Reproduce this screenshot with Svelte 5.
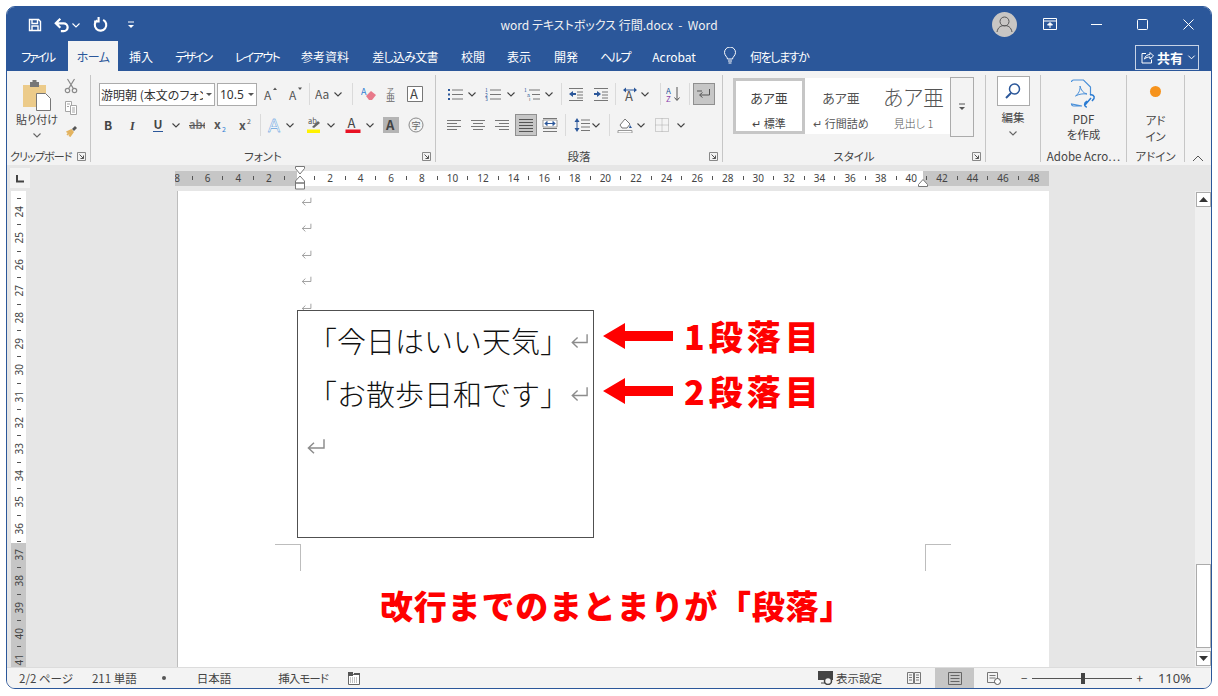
<script>
const tabs = [["ファイル", 61, -2.2], ["ホーム", 50, -0.6], ["挿入", 46, 0], ["デザイン", 58, -2], ["レイアウト", 70, -1.6], ["参考資料", 66, 0], ["差し込み文書", 94, -0.7], ["校閲", 42, 0], ["表示", 50, 0], ["開発", 44, 0], ["ヘルプ", 54, -1.6], ["Acrobat", 64, 0]];

const line = 'fill="none" stroke="currentColor"';
const lines = (arr, c = "#777") => arr.map(([a, b, y]) => `<path d="M${a} ${y}H${b}" stroke="${c}" fill="none"/>`).join("");

// all icons are drawn on a 16x16 box
const I = {
  save: `<path d="M2.5 2.5h9l2 2v9h-11zM5 2.5v4h5.5v-4M5 13.5v-4.5h6v4.5" ${line} stroke-width="1.4"/>`,
  undo: `<path d="M6.5 2.5 2.5 6.5l4 4M3 6.5h6.5a3.4 3.4 0 0 1 0 7H7" ${line} stroke-width="2"/>`,
  redo: `<path d="M10.5 3.6a5.4 5.4 0 1 1-5.6.4M6.2 1v4.2H2" ${line} stroke-width="2"/>`,
  qat: `<path d="M5 5h6" stroke="currentColor"/><path d="M5 8h6l-3 3z" fill="currentColor"/>`,
  chev: `<path d="M4.5 6.5 8 10l3.5-3.5" ${line} stroke-width="1.1"/>`,
  cut: `<g fill="none" stroke="#8a8a8a" stroke-width="1.2"><circle cx="4.5" cy="12.5" r="2.2"/><circle cx="11.5" cy="12.5" r="2.2"/><path d="M5.6 10.6 11.5 1M10.4 10.6 4.5 1"/></g>`,
  copy: `<g fill="#fff" stroke="#a5a5a5"><path d="M2.5 1.5h6v10h-6z"/><path d="M7.5 5.5h6v9h-6z"/><path d="M4 4h3M4 6.5h2M9 8h3M9 10h3M9 12h3"/></g>`,
  painter: `<path d="M9 7l3-3 2 2-3 3z" fill="#555"/><path d="M3 9.5 8.5 7 11 10l-3.5 5-2-1 1-2-2 1.500-1-1 1.500-2-1 .5z" fill="#e3b35f"/>`,
  grow: `<text x="2" y="14" font-size="12" fill="#555">A</text><path d="M11 4l2-2.500L15 4z" fill="#555"/>`,
  shrink: `<text x="2" y="14" font-size="12" fill="#555">A</text><path d="M11 1.500l2 2.500 2-2.500z" fill="#555"/>`,
  case: `<text x="0" y="13" font-size="12" fill="#555">Aa</text>`,
  erase: `<text x="0" y="9" font-size="9" fill="#2b7cd3">A</text><path d="M5 10l5-5 5 4-4 5H8z" fill="#e8798a"/>`,
  ruby: `<text x="4" y="7" font-size="7" fill="#666">ア</text><text x="3" y="15" font-size="9" fill="#666">亜</text>`,
  boxa: `<path d="M.5.5h15v15H.5z" fill="#fff" stroke="#777"/><text x="3" y="13" font-size="13" fill="#444">A</text>`,
  bold: `<text x="4" y="13" font-size="12" font-weight="700" fill="#444">B</text>`,
  ital: `<text x="5" y="13" font-size="12" font-weight="700" font-style="italic" font-family="Liberation Serif" fill="#444">I</text>`,
  under: `<text x="3.500" y="12" font-size="12" font-weight="700" fill="#444">U</text><path d="M3 14.500h10" stroke="#2b579a"/>`,
  strike: `<text x="0" y="12" font-size="11" font-weight="700" fill="#777">abc</text><path d="M0 8.500h16" stroke="#555"/>`,
  sub: `<text x="2" y="12" font-size="12" font-weight="700" fill="#555">x</text><text x="10" y="15" font-size="7" fill="#2b7cd3">2</text>`,
  sup: `<text x="2" y="13" font-size="12" font-weight="700" fill="#555">x</text><text x="10" y="7" font-size="7" fill="#555">2</text>`,
  effect: `<text x="1" y="15" font-size="18" font-weight="300" font-family="Liberation Sans" fill="#eaf3fb" stroke="#2b7cd3" stroke-width=".35">A</text>`,
  mark: `<text x="2" y="7" font-size="7.500" fill="#555">ab</text><path d="M6 10l6-6 2 2-6 5z" fill="#666"/><path d="M1 12.500h13V16H1z" fill="#fff200"/>`,
  color: `<text x="2.500" y="11" font-size="13" fill="#444">A</text><path d="M.5 12.500h15V16H.5z" fill="#e81123"/>`,
  shade: `<path d="M0 0h16v16H0z" fill="#b4b4b4"/><text x="3" y="13" font-size="13" fill="#444" font-weight="700">A</text>`,
  enclose: `<circle cx="8" cy="8" r="7" fill="none" stroke="#888"/><text x="3.500" y="12" font-size="9" fill="#666">字</text>`,
  bullets: `<path d="M1 3h2v2H1zM1 7.500h2v2H1zM1 12h2v2H1z" fill="#2b579a"/>` + lines([[5, 16, 4], [5, 16, 8.5], [5, 16, 13]]),
  numbers: `<text x="0" y="6" font-size="5" fill="#2b579a">1</text><text x="0" y="10.500" font-size="5" fill="#2b579a">2</text><text x="0" y="15" font-size="5" fill="#2b579a">3</text>` + lines([[5, 16, 4], [5, 16, 8.5], [5, 16, 13]]),
  multi: `<text x="0" y="6" font-size="5" fill="#2b579a">1</text><text x="3" y="10.500" font-size="5" fill="#2b579a">a</text><text x="5" y="15" font-size="5" fill="#666">i</text>` + lines([[5, 16, 4], [8, 16, 8.5], [9, 16, 13]]),
  outdent: `<path d="M1 8l4-3v2h3v2H5v2z" fill="#2b579a"/>` + lines([[1, 15, 2.5], [9, 15, 6], [9, 15, 9], [9, 15, 12], [1, 15, 14.5]]),
  indent: `<path d="M8 8 4 5v2H1v2h3v2z" fill="#2b579a"/>` + lines([[1, 15, 2.5], [9, 15, 6], [9, 15, 9], [9, 15, 12], [1, 15, 14.5]]),
  xtext: `<text x="3" y="15" font-size="13" fill="#555">A</text><path d="M1 4l3-2.500v5zM15 4l-3-2.500v5z" fill="#2b579a"/><path d="M4 4h8" stroke="#2b579a"/>`,
  sort: `<text x="0" y="7.500" font-size="8" fill="#2b579a">A</text><text x="0" y="15.500" font-size="8" fill="#8e44ad">Z</text><path d="M11 1v13M8.500 11.500 11 14.500l2.500-3" ${line} color="#555"/>`,
  marks: `<path d="M13.500 3v6H4M6.500 6.500 3.500 9l3 2.500M1 5h5" fill="none" stroke="#555"/>`,
  left: lines([[1, 15, 3.5], [1, 11, 6.5], [1, 15, 9.5], [1, 11, 12.5]]),
  center: lines([[1, 15, 3.5], [3, 13, 6.5], [1, 15, 9.5], [3, 13, 12.5]]),
  right: lines([[1, 15, 3.5], [5, 15, 6.5], [1, 15, 9.5], [5, 15, 12.5]]),
  just: lines([[1, 15, 2.5], [1, 15, 5.5], [1, 15, 8.5], [1, 15, 11.5], [1, 15, 14.5]], "#555"),
  dist: lines([[1, 15, 1.5], [1, 15, 11.5], [1, 15, 14.5]]) + `<path d="M1 3h14v7H1z" fill="#fff" stroke="#999"/><path d="M3 6.500h10M3 6.500l2-2v4zM13 6.500l-2-2v4z" stroke="#2b579a" fill="#2b579a"/>`,
  spacing: `<path d="M3 1l2.500 4h-5zM3 15l2.500-4h-5z" fill="#2b579a"/><path d="M3 5v6" stroke="#2b579a"/>` + lines([[7, 16, 3], [7, 16, 6.5], [7, 16, 10], [7, 16, 13.5]]),
  bucket: `<path d="M3 8l5-6 5 5-3 4H5z" fill="#fff" stroke="#777"/><path d="M13 8l2 3h-3z" fill="#2b579a"/><path d="M1 13.500h14V16H1z" fill="#fff" stroke="#999"/>`,
  grid: `<path d="M1.500 1.500h13v13h-13zM8 1.500v13M1.500 8h13" fill="none" stroke="#a8a8a8" stroke-dasharray="1 1"/>`,
  launch: `<path d="M.5.5h8v8h-8z" fill="none" stroke="#888"/><path d="M2.500 2.500l4 4M6.500 3.500v3h-3" fill="none" stroke="#555"/>`
};

// place items by the x of their centre: a flex row with computed margins
function lay(x0, items) {
  let prev = x0;
  return items.map(([name, cx, w = 16]) => {
    const ml = cx - w / 2 - prev;
    prev = cx + w / 2;
    return { name, w, ml };
  });
}

const ch = (cx) => ["chev", cx, 10];
const sep = (cx) => ["sep", cx, 1];

const font1 = lay(257, [["grow", 270], ["shrink", 295], sep(309), ["case", 323], ch(338), sep(352), ["erase", 369], ["ruby", 391], ["boxa", 415]]);
const font2 = lay(99, [["bold", 108], ["ital", 133], ["under", 158], ch(176), ["strike", 197], ["sub", 220], ["sup", 245], sep(260), ["effect", 275], ch(290), ["mark", 314], ch(331), ["color", 353], ch(370), ["shade", 391], ["enclose", 416]]);
const para1 = lay(436, [["bullets", 455], ch(472), ["numbers", 493], ch(511), ["multi", 532], ch(549), sep(561), ["outdent", 576], ["indent", 601], sep(615), ["xtext", 630], ch(645), sep(660), ["sort", 674], sep(689), ["marks", 704, 22]]);
const para2 = lay(436, [["left", 454], ["center", 478], ["right", 502], ["just", 526, 22], ["dist", 550], sep(565), ["spacing", 582], ch(596), sep(609), ["bucket", 625], ch(641), ["grid", 662], ch(681)]);

const hNums = Array.from({ length: 57 }, (_, i) => i - 8);
const vNums = Array.from({ length: 36 }, (_, i) => 23.5 + i / 2);
</script>

{#snippet arrowMark(w)}
  <svg class="ret" width={w} height={w * 0.8} viewBox="0 0 15 12"><path d="M13.500 1v6.500H2M6 3.500 1.800 7.500 6 11.500" fill="none" stroke="#8c8c8c" stroke-width="1.100"/></svg>
{/snippet}

{#snippet row(items)}
  <div class="row">
    {#each items as it}
      {#if it.name === "sep"}
        <i class="vsep" style="margin-left:{it.ml}px"></i>
      {:else}
        <svg class:on={it.name === "marks" || it.name === "just"} class="ic" style="margin-left:{it.ml}px" width={it.w} height={it.name === "chev" ? 16 : it.w} viewBox={it.w === 22 ? "-3 -3 22 22" : it.w === 10 ? "3 0 10 16" : "0 0 16 16"}>{@html I[it.name]}</svg>
      {/if}
    {/each}
  </div>
{/snippet}

{#snippet launcher()}
  <svg class="launch" width="9" height="9" viewBox="0 0 9 9">{@html I.launch}</svg>
{/snippet}

<div class="window">
  <header class="title">
    <div class="qat">
      <svg width="16" height="16" viewBox="0 0 16 16" class="q1">{@html I.save}</svg>
      <svg width="18" height="18" viewBox="0 0 16 16" class="q2">{@html I.undo}</svg>
      <svg width="10" height="16" viewBox="3 0 10 16">{@html I.chev}</svg>
      <svg width="17" height="17" viewBox="0 0 16 16" class="q3">{@html I.redo}</svg>
      <svg width="12" height="16" viewBox="2 0 12 16" class="q4">{@html I.qat}</svg>
    </div>
    <div class="doc">word テキストボックス 行間.docx&nbsp; - &nbsp;Word</div>
    <div class="winbtns">
      <span class="wb">
        <svg width="25" height="25" viewBox="0 0 25 25"><circle cx="12.500" cy="12.500" r="12.500" fill="#c8c6c4"/><circle cx="12.500" cy="9.500" r="4.500" fill="none" stroke="#555"/><path d="M5 20c1-5 4-6.500 7.500-6.500S19 15 20 20" fill="none" stroke="#555"/></svg>
      </span>
      <span class="wb">
        <svg width="14" height="12" viewBox="0 0 14 12"><path d="M.5.5h13v11H.5zM.5 3h13" fill="none" stroke="#fff"/><path d="M7 4.500 4.500 7h5zM7 7v3" stroke="#fff" fill="#fff"/></svg>
      </span>
      <span class="wb"><svg width="11" height="11" viewBox="0 0 11 11"><path d="M0 5.500h11" stroke="#fff"/></svg></span>
      <span class="wb"><svg width="11" height="11" viewBox="0 0 11 11"><rect x=".5" y=".5" width="10" height="10" rx="1" fill="none" stroke="#fff"/></svg></span>
      <span class="wb"><svg width="11" height="11" viewBox="0 0 11 11"><path d="M.5.5l10 10M10.500.5l-10 10" stroke="#fff"/></svg></span>
    </div>
  </header>

  <nav class="tabs">
    {#each tabs as [label, w, ls], i}
      <div class="tab" class:active={i === 1} style="width:{w}px;letter-spacing:{ls}px">{label}</div>
    {/each}
    <svg class="bulb" width="14" height="18" viewBox="0 0 14 18"><path d="M4.500 12c0-2-3-3.500-3-6.500a5.500 5.500 0 0 1 11 0c0 3-3 4.500-3 6.500zM5 14h4M5.500 16h3" fill="none" stroke="#fff"/></svg>
    <div class="tell">何をしますか</div>
    <div class="share">
      <svg width="13" height="13" viewBox="0 0 13 13"><path d="M5 2.500H1v9.500h9.500V8.500M3.500 8c.5-3 3-4.500 5.500-4.500V1.500l3.500 3.500L9 8V6c-2 0-4 .5-5.500 2z" fill="none" stroke="#fff"/></svg>
      <b>共有</b>
      <svg width="9" height="16" viewBox="3 0 10 16" class="sc">{@html I.chev}</svg>
    </div>
  </nav>

  <section class="ribbon">
    <div class="grp clip">
      <div class="cliprow">
        <div class="paste">
          <svg width="30" height="31" viewBox="0 0 30 31"><path d="M0 5h23v22H0z" fill="#eccb8a"/><path d="M7 2h9v5H7z" fill="#777"/><path d="M9.500 0h4v3h-4z" fill="#777"/><path d="M13.500 13.500h9l5 5v12h-14z" fill="#fff" stroke="#777"/></svg>
          <span>貼り付け</span>
          <svg width="10" height="16" viewBox="3 0 10 16" class="gray">{@html I.chev}</svg>
        </div>
        <div class="minis">
          <svg width="16" height="16" viewBox="0 0 16 16">{@html I.cut}</svg>
          <svg width="16" height="16" viewBox="0 0 16 16">{@html I.copy}</svg>
          <svg width="16" height="16" viewBox="0 0 16 16">{@html I.painter}</svg>
        </div>
      </div>
      <div class="glabel">クリップボード{@render launcher()}</div>
    </div>

    <div class="grp font">
      <div class="rows">
        <div class="row">
          <div class="combo fname">游明朝 (本文のフォン<em></em></div>
          <div class="combo fsize">10.5<em></em></div>
          {#each font1 as it}
            {#if it.name === "sep"}
              <i class="vsep" style="margin-left:{it.ml}px"></i>
            {:else}
              <svg class="ic" style="margin-left:{it.ml}px" width={it.w} height="16" viewBox={it.w === 10 ? "3 0 10 16" : "0 0 16 16"}>{@html I[it.name]}</svg>
            {/if}
          {/each}
        </div>
        {@render row(font2)}
      </div>
      <div class="glabel">フォント{@render launcher()}</div>
    </div>

    <div class="grp para">
      <div class="rows">
        {@render row(para1)}
        {@render row(para2)}
      </div>
      <div class="glabel">段落{@render launcher()}</div>
    </div>

    <div class="grp styles">
      <div class="gallery">
        <div class="swatches">
          <div class="sw cur"><p>あア亜</p><small>↵ 標準</small></div>
          <div class="sw"><p>あア亜</p><small>↵ 行間詰め</small></div>
          <div class="sw big"><p>あア亜</p><small>見出し 1</small></div>
        </div>
        <div class="more"><svg width="12" height="16" viewBox="2 0 12 16">{@html I.qat}</svg></div>
      </div>
      <div class="glabel">スタイル{@render launcher()}</div>
    </div>

    <div class="grp edit">
      <div class="big-tool">
        <div class="find"><svg width="18" height="18" viewBox="0 0 18 18"><circle cx="10.500" cy="7" r="5" fill="none" stroke="#2b579a" stroke-width="1.500"/><path d="M7 11l-5 5" stroke="#2b579a" stroke-width="2"/></svg></div>
        <span>編集</span>
        <svg width="10" height="16" viewBox="3 0 10 16" class="gray">{@html I.chev}</svg>
      </div>
    </div>

    <div class="grp pdf">
      <div class="big-tool">
        <svg class="pdfic" width="28" height="30" viewBox="0 0 28 30"><path d="M1.500 3a2 2 0 0 1 2-2h10l7 7v8M12 27H3.500a2 2 0 0 1-2-2z" fill="none" stroke="#4a90d9" stroke-width="1.200"/><path d="M5.500 17c3-2 5-6 4.500-10 1 4 3 7 7 8-4-.5-8 0-11.500 2z" fill="none" stroke="#4a90d9"/><path d="M15 26l6-7M17 28c-2 0-3-2-2-4l2-2M20 16c2-1 5 1 4 3.500l-2 2.500" fill="none" stroke="#2b7cd3" stroke-width="1.500"/></svg>
        <span class="mt">PDF<br />を作成</span>
      </div>
      <div class="glabel">Adobe Acro…</div>
    </div>

    <div class="grp addin">
      <div class="big-tool">
        <i class="dot"></i>
        <span class="mt2">アド<br />イン</span>
      </div>
      <div class="glabel">アドイン</div>
    </div>

    <div class="collapse"><svg width="12" height="8" viewBox="0 0 12 8"><path d="M1 7l5-5 5 5" fill="none" stroke="#555"/></svg></div>
  </section>

  <div class="rulerbar">
    <div class="tabstop"><svg width="9" height="9" viewBox="0 0 9 9"><path d="M1 1v6.500h7" fill="none" stroke="#444" stroke-width="2"/></svg></div>
    <div class="hruler">
      <div class="hticks">
        {#each hNums as n}
          <span class="hc">{#if n === 0}{:else if n % 2}<i></i>{:else}{Math.abs(n)}{/if}</span>
        {/each}
      </div>
      <svg class="indent" width="12" height="25" viewBox="0 0 12 25"><path d="M1.500.5h9v2L6 8 1.500 2.500zM6 10l4.500 5v2h-9v-2zM1.500 17h9v6h-9z" fill="#fff" stroke="#777"/></svg>
      <svg class="rindent" width="12" height="8" viewBox="0 0 12 8"><path d="M6 .5l4.500 5v2h-9v-2z" fill="#fff" stroke="#777"/></svg>
    </div>
  </div>

  <main class="body">
    <div class="side">
      <div class="vruler">
        {#each vNums as n}
          <span class="vc">{#if n % 1}<i></i>{:else}<b>{n}</b>{/if}</span>
        {/each}
      </div>
    </div>

    <div class="page">
      <div class="marks">
        {#each [0, 1, 2, 3, 4] as m}
          <div class="pm">{@render arrowMark(11)}</div>
        {/each}
      </div>

      <div class="boxwrap">
        <div class="textbox">
          <p>「今日はいい天気」{@render arrowMark(19)}</p>
          <p>「お散歩日和です」{@render arrowMark(19)}</p>
          <p class="last">{@render arrowMark(20)}</p>
        </div>
        <div class="note n1">
          <svg width="70" height="26" viewBox="0 0 70 26"><path d="M0 13 22 0v8h48v10H22v8z" fill="#f00"/></svg>
          <b>1段落目</b>
        </div>
        <div class="note n2">
          <svg width="70" height="26" viewBox="0 0 70 26"><path d="M0 13 22 0v8h48v10H22v8z" fill="#f00"/></svg>
          <b>2段落目</b>
        </div>
      </div>

      <div class="crops">
        <i class="crop cl"></i>
        <i class="crop cr"></i>
      </div>

      <div class="caption">改行までのまとまりが「段落」</div>
    </div>

    <div class="gutter"></div>

    <div class="scroll">
      <div class="sb"><svg width="9" height="5" viewBox="0 0 9 5"><path d="M4.500 0 9 5H0z" fill="#333"/></svg></div>
      <div class="thumb"></div>
      <div class="sb"><svg width="9" height="5" viewBox="0 0 9 5"><path d="M4.500 5 9 0H0z" fill="#333"/></svg></div>
    </div>
  </main>

  <footer class="status">
    <span class="s1">2/2 ページ</span>
    <span class="s2">211 単語</span>
    <i class="s3"></i>
    <span class="s4">日本語</span>
    <span class="s5">挿入モード</span>
    <svg class="s6" width="12" height="13" viewBox="0 0 12 13"><path d="M.5 2.500h11v10H.5z" fill="#fff" stroke="#666"/><path d="M0 0h5v4H0zM6 1h6v2H6z" fill="#555"/><path d="M2 6h8M2 8h8M2 10h8" stroke="#888" stroke-dasharray="1 1"/></svg>
    <div class="sright">
      <svg width="15" height="14" viewBox="0 0 15 14"><path d="M0 0h15v9H0z" fill="#444"/><circle cx="10" cy="10" r="3.500" fill="#f3f3f3" stroke="#444" stroke-width="1.500"/><path d="M3 12h4" stroke="#444"/></svg>
      <span class="disp">表示設定</span>
      <svg class="v1" width="14" height="12" viewBox="0 0 14 12"><path d="M.5.500h6v11h-6zM7.500.500h6v11h-6zM2 3h3M2 5.500h3M2 8h3M9 3h3M9 5.500h3M9 8h3" fill="none" stroke="#777"/></svg>
      <div class="vbtn"><svg width="14" height="13" viewBox="0 0 14 13"><path d="M.5.500h13v12H.5zM2.500 3.500h9M2.500 6.500h9M2.500 9.500h9" fill="none" stroke="#666"/></svg></div>
      <svg class="v3" width="14" height="13" viewBox="0 0 14 13"><path d="M.5.500h10v10H.5zM2.500 3.500h6M2.500 6h6" fill="none" stroke="#777"/><circle cx="10.500" cy="9.500" r="3" fill="#fff" stroke="#555"/></svg>
      <span class="zm">−</span>
      <div class="slider"><i></i></div>
      <span class="zp">+</span>
      <span class="zv">110%</span>
    </div>
  </footer>
</div>

<style>
  :global(body) {
    margin: 0;
    background: #fff;
  }
  .window {
    box-sizing: border-box;
    width: 1206px;
    height: 683px;
    margin: 6px 0 0 6px;
    border: 1px solid #2b579a;
    border-radius: 9px;
    overflow: hidden;
    display: flex;
    flex-direction: column;
    background: #e6e6e6;
    font-family: "Noto Sans CJK JP", "Noto Sans", sans-serif;
    font-feature-settings: "palt";
    color: #444;
  }

  /* title bar */
  .title {
    flex: none;
    height: 34px;
    display: grid;
    grid-template-columns: 1fr auto 1fr;
    align-items: center;
    background: #2b579a;
    color: #fff;
  }
  .qat {
    display: flex;
    align-items: center;
    padding-left: 20px;
    padding-top: 1px;
  }
  .q2 { margin-left: 10px; }
  .q3 { margin-left: 11px; }
  .q4 { margin-left: 16px; }
  .doc {
    font-size: 12px;
    color: #f2f2f2;
  }
  .winbtns {
    display: flex;
    justify-content: flex-end;
  }
  .wb {
    width: 46px;
    height: 34px;
    display: flex;
    align-items: center;
    justify-content: center;
  }

  /* tabs */
  .tabs {
    flex: none;
    height: 30px;
    display: flex;
    align-items: center;
    background: #2b579a;
    color: #fff;
    font-size: 12px;
  }
  .tab {
    flex: none;
    height: 30px;
    line-height: 31px;
    text-align: center;
    white-space: nowrap;
  }
  .tab.active {
    background: #f3f3f3;
    color: #2b579a;
  }
  .bulb { margin-left: 17px; }
  .tell {
    margin-left: 13px;
    letter-spacing: -1.400px;
  }
  .share {
    margin-left: auto;
    margin-right: 12px;
    margin-top: 2px;
    width: 64px;
    height: 25px;
    box-sizing: border-box;
    border: 1px solid #c7d3e6;
    display: flex;
    align-items: center;
    padding-left: 5px;
    gap: 3px;
    font-size: 13px;
  }
  .sc { margin-left: 1px; }

  /* ribbon */
  .ribbon {
    flex: none;
    height: 94px;
    display: flex;
    background: #f3f3f3;
    font-size: 12px;
  }
  .grp {
    box-sizing: border-box;
    position: relative;
    height: 87px;
    margin-top: 4px;
    border-right: 1px solid #c6c6c6;
    display: flex;
    flex-direction: column;
    flex: none;
  }
  .clip { width: 84px; }
  .font { width: 345px; }
  .para { width: 287px; }
  .styles { width: 263px; }
  .edit { width: 55px; }
  .pdf { width: 86px; }
  .addin { width: 58px; }
  .rows {
    flex: 1;
    display: flex;
    flex-direction: column;
    gap: 7px;
    padding-top: 7px;
  }
  .font .rows { padding-left: 8px; }
  .row {
    display: flex;
    align-items: center;
    height: 24px;
  }
  .ic { flex: none; }
  .ic.on {
    background: #c6c6c6;
    outline: 1px solid #8f8f8f;
    outline-offset: -1px;
  }
  .vsep {
    flex: none;
    width: 1px;
    height: 22px;
    background: #dadada;
  }
  .glabel {
    flex: none;
    height: 16px;
    margin-bottom: -3px;
    line-height: 15px;
    text-align: center;
    font-size: 11.500px;
    white-space: nowrap;
  }
  .launch {
    position: absolute;
    right: 4px;
    bottom: 1px;
  }
  .cliprow {
    flex: 1;
    display: flex;
  }
  .paste {
    width: 52px;
    margin-left: 4px;
    display: flex;
    flex-direction: column;
    align-items: center;
    padding-top: 5px;
    font-size: 11px;
    line-height: 15px;
    white-space: nowrap;
  }
  .paste svg:first-child { margin-left: 2px; }
  .paste span { margin-top: 1px; }
  .gray { color: #666; }
  .minis {
    display: flex;
    flex-direction: column;
    gap: 6px;
    padding-top: 3px;
  }
  .clip .glabel {
    text-align: left;
    padding-left: 3px;
    font-size: 11px;
    letter-spacing: -0.9px;
  }
  .combo {
    position: relative;
    box-sizing: border-box;
    height: 23px;
    background: #fff;
    border: 1px solid #ababab;
    line-height: 21px;
    padding-left: 1px;
    overflow: hidden;
    white-space: nowrap;
    color: #333;
  }
  .combo em {
    position: absolute;
    right: 0;
    top: 0;
    width: 11px;
    height: 21px;
    background: #fff;
  }
  .combo em::after {
    content: "";
    position: absolute;
    left: 3px;
    top: 9px;
    border: 3px solid transparent;
    border-top: 3px solid #555;
  }
  .fname { width: 116px; margin-right: 2px; }
  .fsize { width: 40px; font-family: "Noto Sans", sans-serif; padding-left: 2px; }

  .gallery {
    flex: 1;
    display: flex;
    align-items: flex-start;
    padding: 2px 0 0 10px;
  }
  .swatches {
    display: flex;
    width: 217px;
    height: 56px;
    margin-top: 1px;
    background: #fff;
  }
  .sw {
    width: 72px;
    box-sizing: border-box;
    text-align: center;
    color: #555;
    font-size: 13px;
    padding-top: 8px;
  }
  .sw p {
    margin: 0;
    height: 29px;
    line-height: 24px;
  }
  .sw small {
    font-size: 11px;
    display: block;
    line-height: 16px;
  }
  .sw.cur {
    border: 3px solid #c6c6c6;
    padding-top: 5px;
    color: #444;
  }
  .sw.big {
    width: 73px;
    font-size: 21px;
    font-weight: 300;
    padding-top: 6px;
  }
  .sw.big p {
    height: 31px;
  }
  .more {
    box-sizing: border-box;
    width: 24px;
    height: 60px;
    border: 1px solid #ababab;
    display: flex;
    align-items: center;
    justify-content: center;
    color: #555;
  }
  .big-tool {
    flex: 1;
    display: flex;
    flex-direction: column;
    align-items: center;
    font-size: 11.500px;
    text-align: center;
    line-height: 15px;
  }
  .find {
    width: 33px;
    height: 30px;
    box-sizing: border-box;
    margin-top: 1px;
    background: #fff;
    border: 1px solid #ababab;
    display: flex;
    align-items: center;
    justify-content: center;
  }
  .edit span { margin-top: 4px; }
  .pdfic { margin-top: 4px; }
  .mt { margin-top: 3px; }
  .dot {
    width: 11px;
    height: 11px;
    margin-top: 11px;
    border-radius: 50%;
    background: #f6931d;
  }
  .mt2 {
    margin-top: 15px;
    line-height: 16px;
  }
  .collapse {
    flex: 1;
    display: flex;
    align-items: flex-end;
    justify-content: center;
    padding-bottom: 3px;
  }

  /* rulers */
  .rulerbar {
    flex: none;
    height: 26px;
    display: flex;
    align-items: center;
    background: #e6e6e6;
  }
  .tabstop {
    flex: none;
    width: 20px;
    height: 20px;
    margin-left: 3px;
    background: #f3f3f3;
    display: flex;
    align-items: center;
    justify-content: center;
  }
  .hruler {
    position: relative;
    flex: none;
    width: 874px;
    height: 15px;
    margin-left: 145px;
    background: linear-gradient(90deg, #c6c6c6 122px, #fff 122px, #fff 748px, #c6c6c6 748px);
  }
  .hticks {
    display: flex;
    height: 100%;
    overflow: hidden;
  }
  .hc {
    flex: none;
    width: 15.300px;
    display: flex;
    align-items: center;
    justify-content: center;
    font: 10px "Noto Sans", sans-serif;
    color: #444;
  }
  .hc:first-child { margin-left: -5.600px; }
  .hc i {
    width: 1px;
    height: 4px;
    background: #555;
  }
  .indent {
    position: absolute;
    left: 119px;
    top: -5px;
  }
  .rindent {
    position: absolute;
    left: 742px;
    top: 8px;
  }

  /* document area */
  .body {
    flex: 1;
    min-height: 0;
    display: flex;
  }
  .side {
    flex: none;
    width: 170px;
    padding-left: 4px;
    box-sizing: border-box;
  }
  .vruler {
    width: 15px;
    height: 100%;
    overflow: hidden;
    padding-top: 1px;
    box-sizing: border-box;
    background: linear-gradient(#fff 352px, #c6c6c6 352px);
  }
  .vc {
    height: 13.200px;
    display: flex;
    align-items: center;
    justify-content: center;
    font-size: 10px;
    color: #444;
  }
  .vc i {
    width: 4px;
    height: 1px;
    background: #555;
  }
  .vc b {
    font: 10px "Noto Sans", sans-serif;
    writing-mode: vertical-rl;
    transform: rotate(180deg);
  }
  .page {
    flex: none;
    box-sizing: border-box;
    width: 872px;
    height: 100%;
    background: #fff;
    border-left: 1px solid #bdbdbd;
    overflow: hidden;
  }
  .marks {
    margin-top: -3px;
    padding-left: 123px;
    height: 122px;
    box-sizing: border-box;
  }
  .pm {
    height: 26.500px;
    display: flex;
    align-items: center;
  }
  .ret { flex: none; }
  .boxwrap {
    position: relative;
    width: 297px;
    margin-left: 119px;
  }
  .textbox {
    position: relative;
    box-sizing: border-box;
    width: 297px;
    height: 228px;
    background: #fff;
    border: 1px solid #505050;
    padding-top: 2px;
  }
  .textbox p {
    margin: 0;
    height: 53px;
    display: flex;
    align-items: center;
    padding-left: 10px;
    font-size: 29px;
    font-weight: 300;
    font-feature-settings: normal;
    color: #111;
    white-space: nowrap;
  }
  .textbox .ret { margin-left: 1px; margin-top: 3px; }
  .textbox .last { padding-left: 8px; }
  .textbox .last .ret { margin-left: 0; margin-top: 0; }
  .note {
    position: absolute;
    left: 306px;
    display: flex;
    align-items: center;
    color: #f00;
    white-space: nowrap;
  }
  .note b {
    margin-left: 11px;
    font-size: 34px;
    font-weight: 900;
    line-height: 40px;
    letter-spacing: 4px;
    font-feature-settings: normal;
  }
  .n1 { top: 6px; }
  .n2 { top: 61px; }
  .crops {
    display: flex;
    justify-content: space-between;
    width: 676px;
    margin: 6px 0 0 97px;
  }
  .crop {
    width: 26px;
    height: 27px;
    box-sizing: border-box;
    border-top: 1px solid #bdbdbd;
  }
  .cl { border-right: 1px solid #bdbdbd; }
  .cr { border-left: 1px solid #bdbdbd; }
  .caption {
    margin: 12px 0 0 202px;
    color: #f00;
    font-size: 33px;
    font-weight: 900;
    line-height: 44px;
    letter-spacing: 0.800px;
    white-space: nowrap;
    font-feature-settings: normal;
  }
  .gutter {
    flex: none;
    width: 146px;
  }
  .scroll {
    flex: none;
    width: 16px;
    background: #f0f0f0;
    display: flex;
    flex-direction: column;
    align-items: center;
    padding-top: 1px;
    box-sizing: border-box;
  }
  .sb {
    box-sizing: border-box;
    width: 15px;
    height: 15px;
    background: #fff;
    border: 1px solid #ababab;
    display: flex;
    align-items: center;
    justify-content: center;
  }
  .thumb {
    box-sizing: border-box;
    width: 15px;
    height: 84px;
    margin-top: 357px;
    margin-bottom: 3px;
    background: #fff;
    border: 1px solid #ababab;
  }

  /* status bar */
  .status {
    flex: none;
    height: 21px;
    display: flex;
    align-items: center;
    background: #f3f3f3;
    border-top: 1px solid #dcdcdc;
    box-sizing: border-box;
    font-size: 11.500px;
    color: #444;
    white-space: nowrap;
  }
  .s1 { margin-left: 12px; }
  .s2 { margin-left: 19px; }
  .s3 {
    width: 4px;
    height: 4px;
    margin-left: 25px;
    border-radius: 50%;
    background: #555;
  }
  .s4 { margin-left: 31px; }
  .s5 {
    margin-left: 47px;
    letter-spacing: -0.9px;
  }
  .s6 { margin-left: 20px; }
  .sright {
    margin-left: auto;
    display: flex;
    align-items: center;
    height: 100%;
    padding-right: 20px;
  }
  .disp { margin-left: 3px; }
  .v1 { margin-left: 25px; }
  .vbtn {
    width: 39px;
    height: 100%;
    margin-left: 14px;
    background: #c6c6c6;
    display: flex;
    align-items: center;
    justify-content: center;
  }
  .v3 { margin-left: 13px; }
  .zm { margin-left: 20px; }
  .slider {
    position: relative;
    width: 100px;
    height: 1px;
    margin-left: 5px;
    background: #555;
  }
  .slider i {
    position: absolute;
    left: 49px;
    top: -5px;
    width: 4px;
    height: 11px;
    background: #444;
  }
  .zp { margin-left: 4px; }
  .zv {
    margin-left: 15px;
    font: 13px "Noto Sans", sans-serif;
  }
</style>
